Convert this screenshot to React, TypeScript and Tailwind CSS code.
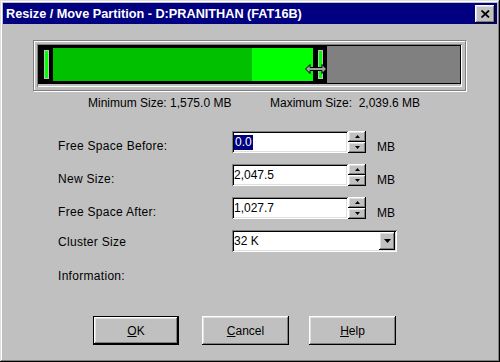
import React from "react";

const raised =
  "shadow-[inset_-1px_-1px_0_#000,inset_1px_1px_0_#fff,inset_-2px_-2px_0_#808080,inset_2px_2px_0_#dfdfdf]";
const sunken =
  "shadow-[inset_1px_1px_0_#808080,inset_-1px_-1px_0_#fff,inset_2px_2px_0_#000,inset_-2px_-2px_0_#dfdfdf]";

function Tri({ dir, w = 5, h = 3 }: { dir: "up" | "down"; w?: number; h?: number }) {
  const pts = dir === "up" ? `0,${h} ${w},${h} ${w / 2},0` : `0,0 ${w},0 ${w / 2},${h}`;
  return (
    <svg width={w} height={h} viewBox={`0 0 ${w} ${h}`} className="block">
      <polygon points={pts} fill="#000" />
    </svg>
  );
}

function Spinner() {
  return (
    <div className="flex flex-col w-[18px] h-[22px]">
      <div className={`h-[11px] bg-[#c0c0c0] flex items-center justify-center ${raised}`}>
        <Tri dir="up" />
      </div>
      <div className={`h-[11px] bg-[#c0c0c0] flex items-center justify-center ${raised}`}>
        <Tri dir="down" />
      </div>
    </div>
  );
}

function Field({ label, value, selected }: { label: string; value: string; selected?: boolean }) {
  return (
    <div className="flex h-[22px]">
      <div className="w-[174px] pt-[8px] leading-[14px] whitespace-nowrap tracking-[0.3px]">{label}</div>
      <div className={`w-[116px] h-[22px] bg-white flex items-center pl-[2px] ${sunken}`}>
        <span className={`leading-[15px] ${selected ? "bg-[#000080] text-white px-px" : ""}`}>{value}</span>
      </div>
      <Spinner />
      <div className="ml-[11px] pt-[9px] leading-[14px]">MB</div>
    </div>
  );
}

function Btn({ children, def, className = "" }: { children: React.ReactNode; def?: boolean; className?: string }) {
  const inner = (
    <div className={`h-full w-full bg-[#c0c0c0] flex items-center justify-center ${raised}`}>{children}</div>
  );
  return def ? (
    <div className={`h-[29px] border border-black ${className}`}>{inner}</div>
  ) : (
    <div className={`h-[29px] ${className}`}>{inner}</div>
  );
}

export default function App() {
  return (
    <div
      className={`w-[500px] h-[362px] bg-[#c0c0c0] p-[3px] flex flex-col text-[12px] text-black font-['Liberation_Sans',Arial,sans-serif] shadow-[inset_-1px_-1px_0_#000,inset_1px_1px_0_#dfdfdf,inset_-2px_-2px_0_#808080,inset_2px_2px_0_#fff]`}
    >
      {/* Title bar */}
      <div className="h-[21px] bg-[#000080] flex items-center justify-between pl-[3px] pr-[2px]">
        <span className="text-white font-bold text-[12.7px] leading-[16px] whitespace-nowrap">
          Resize / Move Partition - D:PRANITHAN (FAT16B)
        </span>
        <div className={`w-[20px] h-[18px] bg-[#c0c0c0] flex items-center justify-center ${raised}`}>
          <svg width="9" height="8" viewBox="0 0 9 8" className="block">
            <path d="M0.5 0.5 L8 7.5 M8 0.5 L0.5 7.5" stroke="#000" strokeWidth="1.8" />
          </svg>
        </div>
      </div>

      {/* Partition frame */}
      <div className="ml-[30px] mt-[16px] w-[433px] h-[51px] border border-[#808080] shadow-[inset_1px_1px_0_#fff,1px_1px_0_#fff] p-[3px]">
        <div className="h-full shadow-[inset_1px_1px_0_#808080,inset_-1px_-1px_0_#fff] p-px">
          <div className="relative flex h-[39px]">
            <div className="w-[289px] bg-black flex py-[3px]">
              <div className="w-[15px] flex justify-center pl-[1px]">
                <div className="w-[5px] my-[2px] bg-[#00ff00] border border-[#c0c0c0]" />
              </div>
              <div className="w-[199px] bg-[#00c000]" />
              <div className="w-[61px] bg-[#00ff00]" />
              <div className="w-[14px] flex justify-center">
                <div className="w-[5px] my-[2px] bg-[#00ff00] border border-[#c0c0c0]" />
              </div>
            </div>
            <div className="flex-1 bg-[#808080] border-t border-b border-r border-black" />
            <svg
              width="22"
              height="10"
              viewBox="0 0 22 10"
              className="absolute left-[267px] top-[19px]"
            >
              <path
                d="M0.5 5 L5 0.5 L5 3.5 L17 3.5 L17 0.5 L21.5 5 L17 9.5 L17 6.5 L5 6.5 L5 9.5 Z"
                fill="#a0a0a0"
                stroke="#000"
                strokeWidth="1"
              />
            </svg>
          </div>
        </div>
      </div>

      {/* Min / Max */}
      <div className="mt-[5px] ml-[85px] flex leading-[14px] whitespace-pre">
        <span className="w-[182px]">Minimum Size: 1,575.0 MB</span>
        <span>Maximum Size:  2,039.6 MB</span>
      </div>

      {/* Form */}
      <div className="ml-[55px] mt-[21px] flex flex-col gap-[11px]">
        <Field label="Free Space Before:" value="0.0" selected />
        <Field label="New Size:" value="2,047.5" />
        <Field label="Free Space After:" value="1,027.7" />
        <div className="flex h-[22px]">
          <div className="w-[174px] pt-[5px] leading-[14px] tracking-[0.3px]">Cluster Size</div>
          <div className={`w-[165px] h-[22px] bg-white flex items-center pl-[2px] pr-[2px] ${sunken}`}>
            <span className="flex-1 leading-[15px]">32 K</span>
            <div className={`w-[16px] h-[18px] bg-[#c0c0c0] flex items-center justify-center ${raised}`}>
              <Tri dir="down" w={7} h={4} />
            </div>
          </div>
        </div>
        <div className="mt-[6px] leading-[14px] tracking-[0.3px]">Information:</div>
      </div>

      {/* Buttons */}
      <div className="mt-[33px] flex">
        <Btn def className="ml-[90px] w-[86px]">
          <span>
            <u>O</u>K
          </span>
        </Btn>
        <Btn className="ml-[23px] w-[87px]">
          <span>
            <u>C</u>ancel
          </span>
        </Btn>
        <Btn className="ml-[20px] w-[87px]">
          <span>
            <u>H</u>elp
          </span>
        </Btn>
      </div>
    </div>
  );
}
